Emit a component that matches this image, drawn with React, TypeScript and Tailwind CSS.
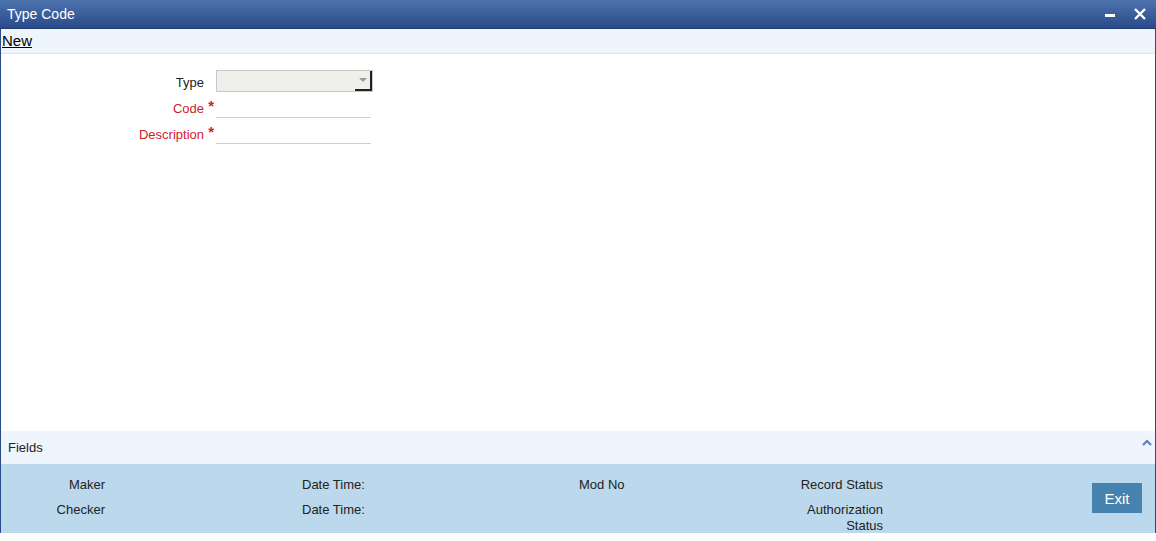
import React from 'react';

const font = { fontFamily: '"Liberation Sans", Arial, sans-serif' };

function TitleBar() {
  return (
    <div className="h-[29px] flex items-center justify-between pl-[7px] pr-[10px] bg-gradient-to-b from-[#4d73ad] to-[#2a4b8a] border-b border-[#1f3d74]">
      <span className="text-white text-[14px] leading-none">Type Code</span>
      <div className="flex items-center gap-[19px]">
        <span className="block w-[10px] h-[3px] bg-white mt-[2px]" />
        <svg width="12" height="12" viewBox="0 0 12 12">
          <path d="M1 1 L11 11 M11 1 L1 11" stroke="white" strokeWidth="2.4" />
        </svg>
      </div>
    </div>
  );
}

function FormRow({ label, required, children }: { label: string; required?: boolean; children: React.ReactNode }) {
  return (
    <div className="flex items-end h-[26px]">
      <div className={`relative w-[215px] pr-[12px] text-right text-[13px] leading-none pb-[5px] ${required ? 'text-[#d0202e]' : 'text-[#222]'}`}>
        {label}
        {required && <span className="absolute right-[2px] -top-[4px] text-[15px] font-bold">*</span>}
      </div>
      {children}
    </div>
  );
}

export default function App() {
  return (
    <div className="w-[1156px] h-[541px] bg-white flex flex-col" style={font}>
      <TitleBar />
      <div className="flex-1 flex flex-col border-x border-[#2a4b8a]">
        <div className="h-[25px] bg-[#eef5fd] border-b border-[#dde3ea] flex items-center pl-[1px]">
          <span className="text-[15px] underline text-black">New</span>
        </div>
        <div className="flex-1 pt-[14px]">
          <FormRow label="Type">
            <div className="w-[157px] h-[22px] mb-[2px] bg-[#f0efeb] border border-[#c8c8c8] flex justify-end items-stretch">
              <div className="w-[17px] border-r-2 border-b-2 border-[#222] bg-[#f0efeb] flex items-center justify-center">
                <svg width="8" height="5" viewBox="0 0 8 5">
                  <path d="M0 0 L8 0 L4 4 Z" fill="#9a9a9a" />
                </svg>
              </div>
            </div>
          </FormRow>
          <FormRow label="Code" required>
            <div className="w-[155px] border-b border-[#cfcfcf] mb-[2px]" />
          </FormRow>
          <FormRow label="Description" required>
            <div className="w-[155px] border-b border-[#cfcfcf] mb-[2px]" />
          </FormRow>
        </div>
        <div className="h-[33px] bg-[#eef5fd] flex items-center justify-between pl-[7px] pr-[3px]">
          <span className="text-[13px] text-[#222]">Fields</span>
          <svg width="10" height="7" viewBox="0 0 10 7" className="-mt-[10px]">
            <path d="M1 6 L5 2 L9 6" stroke="#5b82bd" strokeWidth="2.2" fill="none" />
          </svg>
        </div>
        <div className="h-[69px] bg-[#bcd8ec] flex text-[13px] text-[#222] leading-[13px] pt-[14px]">
          <div className="w-[104px] text-right flex flex-col gap-[12px]">
            <span>Maker</span>
            <span>Checker</span>
          </div>
          <div className="ml-[197px] w-[200px] flex flex-col gap-[12px]">
            <span>Date Time:</span>
            <span>Date Time:</span>
          </div>
          <div className="ml-[77px] w-[150px]">
            <span>Mod No</span>
          </div>
          <div className="w-[154px] text-right flex flex-col gap-[12px]">
            <span>Record Status</span>
            <span className="leading-[16px] -mt-[1px]">Authorization<br />Status</span>
          </div>
          <div className="ml-auto mr-[13px] pt-[5px]">
            <button className="w-[50px] h-[30px] bg-[#4682b0] text-white text-[15px]">Exit</button>
          </div>
        </div>
      </div>
      <div className="h-[8px] bg-white" />
    </div>
  );
}
